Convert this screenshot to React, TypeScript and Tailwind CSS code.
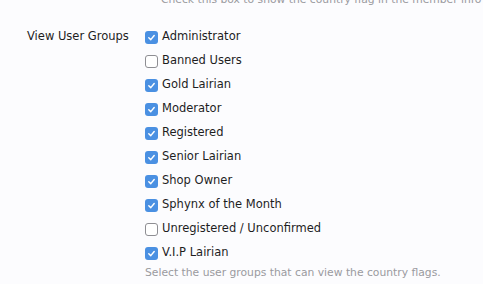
const groups: { name: string; checked: boolean }[] = [
  { name: 'Administrator', checked: true },
  { name: 'Banned Users', checked: false },
  { name: 'Gold Lairian', checked: true },
  { name: 'Moderator', checked: true },
  { name: 'Registered', checked: true },
  { name: 'Senior Lairian', checked: true },
  { name: 'Shop Owner', checked: true },
  { name: 'Sphynx of the Month', checked: true },
  { name: 'Unregistered / Unconfirmed', checked: false },
  { name: 'V.I.P Lairian', checked: true },
];

function Box({ checked }: { checked: boolean }) {
  if (!checked) {
    return <span className="w-[13px] h-[13px] rounded-[3px] border border-[#8e8e93] bg-white shrink-0" />;
  }
  return (
    <span className="w-[13px] h-[13px] rounded-[3px] bg-[#4a90e2] flex items-center justify-center shrink-0">
      <svg width="9" height="9" viewBox="0 0 10 10" fill="none">
        <path d="M2 5.2 L4.2 7.4 L8 2.8" stroke="white" strokeWidth="1.6" strokeLinecap="round" strokeLinejoin="round" />
      </svg>
    </span>
  );
}

export default function App() {
  return (
    <div className="w-[483px] h-[284px] overflow-hidden bg-[#fcfcfe] relative" style={{ fontFamily: '"DejaVu Sans", sans-serif' }}>
      <p className="absolute top-[-7px] left-[161px] text-[10.75px] leading-[14px] text-[#9a9a9e] whitespace-nowrap">
        Check this box to show the country flag in the member info card.
      </p>
      <div className="flex pt-[25px]">
        <div className="w-[145px] pl-[27px] h-[24px] flex items-center text-[11.5px] text-[#1e1e1e]">View User Groups</div>
        <div className="flex flex-col">
          {groups.map((g) => (
            <label key={g.name} className="flex items-center gap-[4px] h-[24px] text-[11.5px] text-[#1e1e1e]">
              <Box checked={g.checked} />
              <span>{g.name}</span>
            </label>
          ))}
          <p className="text-[10.75px] leading-[14px] text-[#9a9a9e] mt-[1px]">Select the user groups that can view the country flags.</p>
        </div>
      </div>
    </div>
  );
}
